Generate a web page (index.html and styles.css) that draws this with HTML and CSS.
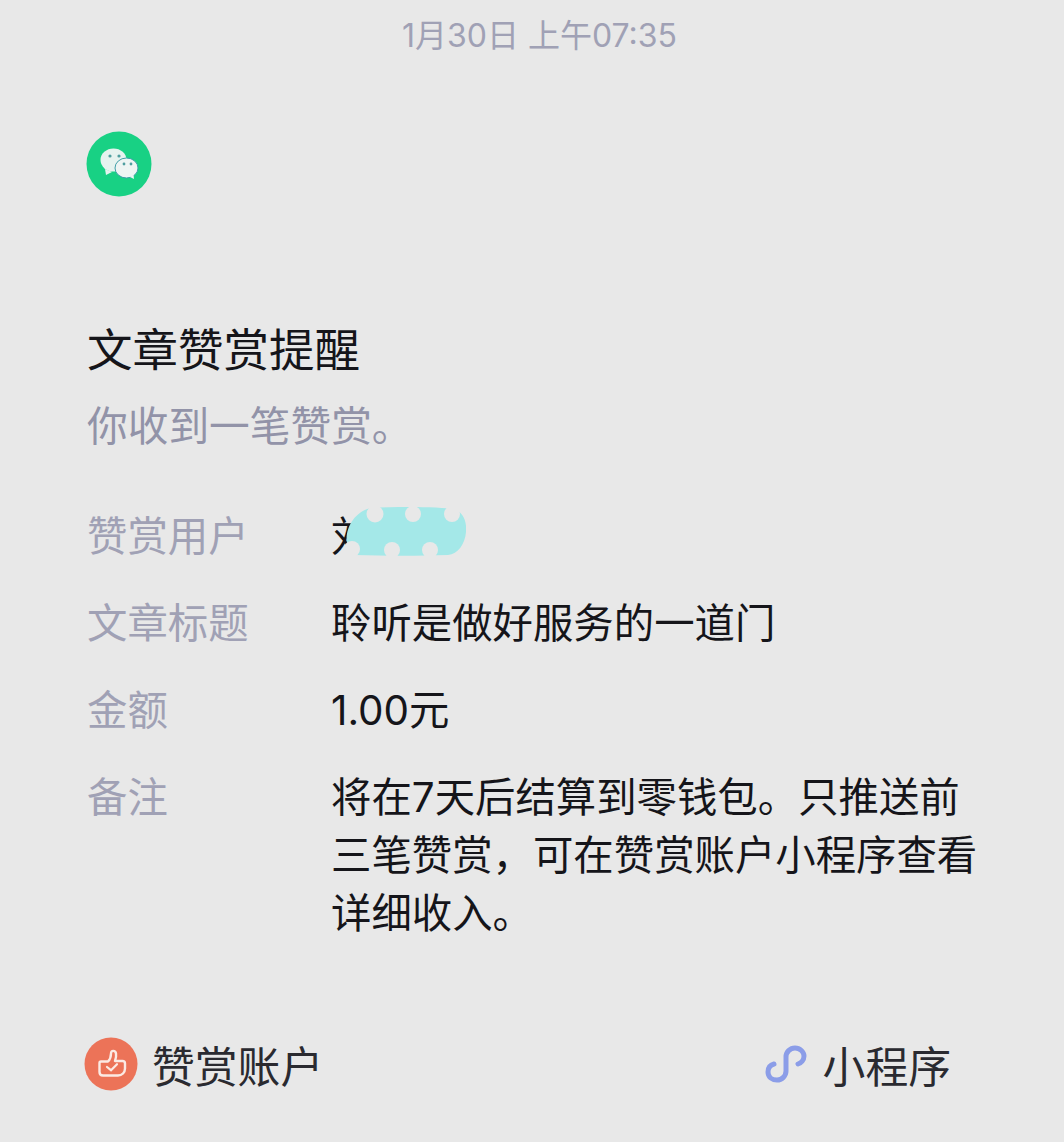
FILE: index.html
```html
<!DOCTYPE html>
<html lang="zh-CN">
<head>
    <meta charset="UTF-8">
    <meta name="viewport" content="width=device-width, initial-scale=1.0">
    <title>文章赞赏提醒</title>
    <link rel="stylesheet" href="styles.css">
</head>
<body>
    <div class="con">
        <div class="time">1月30日 上午07:35</div>
        <div class="logo">
            <svg width="66" height="66" viewBox="0 0 66 66">
                <circle cx="33" cy="33" r="32.500" fill="#18d184"/>
                <ellipse cx="27.500" cy="29" rx="13" ry="11.500" fill="#e6f3ef"/>
                <path d="M19 38l1 6 6-3z" fill="#e6f3ef"/>
                <ellipse cx="40.500" cy="37" rx="11.500" ry="10" fill="#eef5f3" stroke="#3f9fa8" stroke-width="1"/>
                <path d="M44 46l4 2-.5-4.500z" fill="#eef5f3"/>
                <circle cx="24" cy="25" r="1.600" fill="#4f9fa0"/>
                <circle cx="33" cy="25" r="1.600" fill="#4f9fa0"/>
                <circle cx="38" cy="33" r="1.400" fill="#4f9fa0"/>
                <circle cx="45" cy="33" r="1.400" fill="#4f9fa0"/>
            </svg>
        </div>
        <h1 class="title">文章赞赏提醒</h1>
        <p class="sub">你收到一笔赞赏。</p>
        <div class="rows">
            <div class="row">
                <div class="key">赞赏用户</div>
                <div class="val user">刘
                    <svg class="blot" width="124" height="52" viewBox="0 0 124 52">
                        <path d="M28 3C60 1 100 2 112 4c9 3 13 12 12 23-1 12-8 22-18 23-30 1-60 1-94 0l-6-8C1 28 10 8 28 3z" fill="#a4e8e8"/>
                        <circle cx="33" cy="9" r="8.500" fill="#e8e8e8"/>
                        <circle cx="71" cy="9" r="8" fill="#e8e8e8"/>
                        <circle cx="110" cy="9" r="8" fill="#e8e8e8"/>
                        <circle cx="10" cy="44" r="8" fill="#e8e8e8"/>
                        <circle cx="50" cy="45" r="8" fill="#e8e8e8"/>
                        <circle cx="88" cy="45" r="8" fill="#e8e8e8"/>
                    </svg>
                </div>
            </div>
            <div class="row">
                <div class="key">文章标题</div>
                <div class="val">聆听是做好服务的一道门</div>
            </div>
            <div class="row">
                <div class="key">金额</div>
                <div class="val">1.00元</div>
            </div>
            <div class="row">
                <div class="key">备注</div>
                <div class="val">将在7天后结算到零钱包。只推送前三笔赞赏，可在赞赏账户小程序查看详细收入。</div>
            </div>
        </div>
        <div class="foot">
            <div class="acct">
                <svg width="54" height="54" viewBox="0 0 54 54">
                    <circle cx="27" cy="27" r="26.500" fill="#ec7358"/>
                    <path d="M17 24.500h7c2-2 3-5 3-8 0-3.500 4.500-3.500 5 0 .4 2.500 0 5-1 7.500h7.500c1.500 0 2.500 1 2.500 2.500v5c0 4-3 7-7 7H19c-2 0-3.500-1.500-3.500-3.500V26c0-.8.700-1.500 1.500-1.500z" fill="none" stroke="#fbeae4" stroke-width="2.400" stroke-linejoin="round"/>
                    <path d="M23 30l4 3.200 6-6" fill="none" stroke="#fbeae4" stroke-width="2.200" stroke-linecap="round"/>
                </svg>
                <span>赞赏账户</span>
            </div>
            <div class="mini">
                <svg width="42" height="38" viewBox="0 0 42 38">
                    <path d="M9 19C5 20 3 23 3 27c0 5 4 8 9 8 5 0 9-4 9-9V12c0-5 4-9 9-9s9 4 9 8-3 7-6 8" fill="none" stroke="#8b9de8" stroke-width="5" stroke-linecap="round"/>
                </svg>
                <span>小程序</span>
            </div>
        </div>
    </div>
</body>
</html>
```

FILE: styles.css
```css
*{
    margin: 0px;
    padding: 0px;
    box-sizing: border-box;
}
body{
    background-color: #e8e8e8;
    font-family: "Inter", "Noto Sans CJK SC", sans-serif;
    color: #15151a;
}
.con{
    width: 100%;
    height: 1142px;
    overflow: hidden;
    display: flex;
    flex-direction: column;
    padding: 15px 0px 0px 87px;
}
.time{
    height: 42px;
    line-height: 42px;
    font-size: 32px;
    color: #a0a1b5;
    text-align: center;
    margin-left: -72px;
}
.logo{
    height: 66px;
    margin: 74px 0px 0px -1px;
}
.title{
    font-size: 45.500px;
    font-weight: 400;
    line-height: 60px;
    margin-top: 124px;
}
.sub{
    font-size: 40.700px;
    line-height: 60px;
    color: #9293a8;
    margin-top: 16px;
}
.rows{
    display: flex;
    flex-direction: column;
    gap: 29px;
    margin-top: 51px;
}
.row{
    display: flex;
    font-size: 40.400px;
    line-height: 58px;
}
.key{
    width: 244px;
    flex-shrink: 0;
    color: #a0a1b5;
}
.val{
    width: 650px;
    position: relative;
}
.blot{
    position: absolute;
    left: 11px;
    top: -3px;
}
.foot{
    display: flex;
    justify-content: space-between;
    align-items: center;
    margin: 90px 113px 0px -3px;
    font-size: 42.800px;
    color: #2a2a30;
}
.acct,.mini{
    display: flex;
    align-items: center;
}
.acct{
    gap: 14px;
}
.mini{
    gap: 16px;
}
```
